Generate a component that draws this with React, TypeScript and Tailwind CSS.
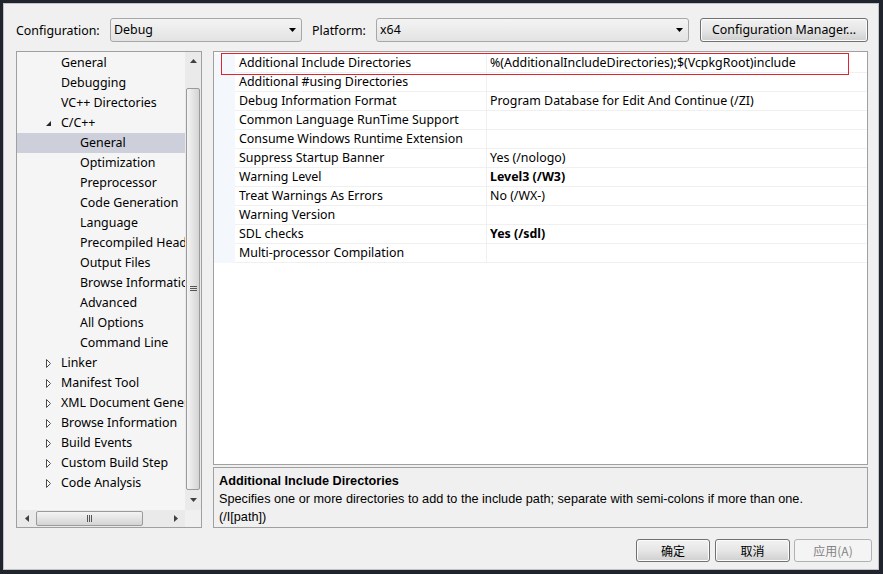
import React from "react";

const UI = { fontFamily: '"Noto Sans", "Liberation Sans", sans-serif' };
const DESC = { fontFamily: '"Liberation Sans", Arial, sans-serif' };
const CJK = { fontFamily: '"Noto Sans CJK SC", "Noto Sans", sans-serif' };

type TreeRow = { label: string; level: 2 | 3; arrow?: "open" | "closed"; selected?: boolean };

const treeRows: TreeRow[] = [
  { label: "General", level: 2 },
  { label: "Debugging", level: 2 },
  { label: "VC++ Directories", level: 2 },
  { label: "C/C++", level: 2, arrow: "open" },
  { label: "General", level: 3, selected: true },
  { label: "Optimization", level: 3 },
  { label: "Preprocessor", level: 3 },
  { label: "Code Generation", level: 3 },
  { label: "Language", level: 3 },
  { label: "Precompiled Headers", level: 3 },
  { label: "Output Files", level: 3 },
  { label: "Browse Information", level: 3 },
  { label: "Advanced", level: 3 },
  { label: "All Options", level: 3 },
  { label: "Command Line", level: 3 },
  { label: "Linker", level: 2, arrow: "closed" },
  { label: "Manifest Tool", level: 2, arrow: "closed" },
  { label: "XML Document Generator", level: 2, arrow: "closed" },
  { label: "Browse Information", level: 2, arrow: "closed" },
  { label: "Build Events", level: 2, arrow: "closed" },
  { label: "Custom Build Step", level: 2, arrow: "closed" },
  { label: "Code Analysis", level: 2, arrow: "closed" },
];

const props: { name: string; value: string; bold?: boolean }[] = [
  { name: "Additional Include Directories", value: "%(AdditionalIncludeDirectories);$(VcpkgRoot)include" },
  { name: "Additional #using Directories", value: "" },
  { name: "Debug Information Format", value: "Program Database for Edit And Continue (/ZI)" },
  { name: "Common Language RunTime Support", value: "" },
  { name: "Consume Windows Runtime Extension", value: "" },
  { name: "Suppress Startup Banner", value: "Yes (/nologo)" },
  { name: "Warning Level", value: "Level3 (/W3)", bold: true },
  { name: "Treat Warnings As Errors", value: "No (/WX-)" },
  { name: "Warning Version", value: "" },
  { name: "SDL checks", value: "Yes (/sdl)", bold: true },
  { name: "Multi-processor Compilation", value: "" },
];

function Arrow({ kind }: { kind: "open" | "closed" }) {
  if (kind === "open") {
    return (
      <svg width="7" height="7" viewBox="0 0 7 7">
        <polygon points="6,1 6,6 1,6" fill="#262626" />
      </svg>
    );
  }
  return (
    <svg width="7" height="9" viewBox="0 0 7 9">
      <polygon points="1.5,0.5 5.5,4.5 1.5,8.5" fill="white" stroke="#4a4a4a" strokeWidth="1" />
    </svg>
  );
}

function Combo({ value, width }: { value: string; width: string }) {
  return (
    <div
      className={`${width} flex h-[24px] items-center justify-between rounded-[3px] border border-[#a7a7a7] bg-gradient-to-b from-[#f4f4f4] to-[#e3e3e3] pl-[3px] pr-[5px] text-[12.4px]`}
    >
      <span>{value}</span>
      <svg width="7" height="4" viewBox="0 0 7 4">
        <polygon points="0,0 7,0 3.5,4" fill="#000" />
      </svg>
    </div>
  );
}

function Button({ children, width, disabled }: { children: React.ReactNode; width: string; disabled?: boolean }) {
  return (
    <div
      className={`${width} flex h-[23px] items-center justify-center rounded-[3px] border ${
        disabled
          ? "border-[#adb2b5] bg-[#f4f4f4] text-[#838383]"
          : "border-[#707070] bg-gradient-to-b from-[#f2f2f2] via-[#e6e6e6] to-[#cfcfcf] text-black shadow-[inset_0_0_0_1px_#fcfcfc]"
      } text-[12px]`}
    >
      {children}
    </div>
  );
}

function VScroll() {
  return (
    <div className="flex w-[16px] shrink-0 flex-col bg-[#eaeaea]">
      <div className="flex h-[18px] items-center justify-center">
        <svg width="7" height="4" viewBox="0 0 7 4">
          <polygon points="0,4 7,4 3.5,0" fill="#404040" />
        </svg>
      </div>
      <div className="h-[18px]" />
      <div className="mx-[1px] flex h-[402px] items-center justify-center rounded-[2px] border border-[#9a9a9a] bg-gradient-to-r from-[#f4f4f4] to-[#d4d4d4]">
        <svg width="7" height="6" viewBox="0 0 7 6">
          <path d="M0 0.5H7M0 2.5H7M0 4.5H7" stroke="#555" strokeWidth="1" />
        </svg>
      </div>
      <div className="flex flex-1 items-center justify-center">
        <svg width="7" height="4" viewBox="0 0 7 4">
          <polygon points="0,0 7,0 3.5,4" fill="#404040" />
        </svg>
      </div>
    </div>
  );
}

function HScroll() {
  return (
    <div className="flex h-[17px] bg-[#eaeaea]">
      <div className="flex flex-1 items-center">
        <div className="flex w-[19px] items-center justify-center">
          <svg width="4" height="7" viewBox="0 0 4 7">
            <polygon points="4,0 4,7 0,3.5" fill="#404040" />
          </svg>
        </div>
        <div className="flex h-[15px] w-[107px] items-center justify-center rounded-[2px] border border-[#9a9a9a] bg-gradient-to-b from-[#f4f4f4] to-[#d4d4d4]">
          <svg width="6" height="7" viewBox="0 0 6 7">
            <path d="M0.5 0V7M2.5 0V7M4.5 0V7" stroke="#555" strokeWidth="1" />
          </svg>
        </div>
        <div className="flex-1" />
        <div className="flex w-[19px] items-center justify-center">
          <svg width="4" height="7" viewBox="0 0 4 7">
            <polygon points="0,0 0,7 4,3.5" fill="#404040" />
          </svg>
        </div>
      </div>
      <div className="w-[16px] bg-[#f0f0f0]" />
    </div>
  );
}

export default function App() {
  return (
    <div className="h-[574px] w-[883px] bg-[#20242c] pb-[4px] pl-[3px] pr-[4px] pt-[3px]" style={UI}>
      <div className="flex h-full flex-col border border-[#bfc3c8] bg-[#f0f0f0] pl-[12px] pr-[10px] text-black">
        {/* top row */}
        <div className="mt-[14px] flex h-[24px] items-center">
          <span className="w-[94px] pt-[2px] text-[12.4px]">Configuration:</span>
          <Combo value="Debug" width="w-[192px]" />
          <span className="ml-[10px] w-[64px] pt-[2px] text-[12.4px]">Platform:</span>
          <Combo value="x64" width="w-[313px]" />
          <div className="ml-[11px] flex h-[24px] w-[168px] items-center justify-center rounded-[3px] border border-[#707070] bg-gradient-to-b from-[#f2f2f2] via-[#e6e6e6] to-[#cfcfcf] text-[12.4px] shadow-[inset_0_0_0_1px_#fcfcfc]">
            Configuration Manager...
          </div>
        </div>

        {/* main */}
        <div className="mt-[9px] flex h-[477px] gap-[11px]">
          {/* tree */}
          <div className="flex w-[186px] flex-col border border-[#a0a0a0] bg-[#f5f5f5]">
            <div className="flex min-h-0 flex-1">
              <div className="min-w-0 flex-1 overflow-hidden pt-[1px] text-[12.4px]">
                {treeRows.map((r, i) => (
                  <div
                    key={i}
                    className={`flex h-[20px] items-center whitespace-nowrap ${r.selected ? "bg-[#cdcfdb]" : ""} ${
                      r.level === 2 ? "pl-[28px]" : "pl-[63px]"
                    }`}
                  >
                    {r.level === 2 && (
                      <span className="flex w-[16px] shrink-0 items-center">{r.arrow ? <Arrow kind={r.arrow} /> : null}</span>
                    )}
                    <span>{r.label}</span>
                  </div>
                ))}
              </div>
              <VScroll />
            </div>
            <HScroll />
          </div>

          {/* right column */}
          <div className="flex flex-1 flex-col gap-[2px]">
            <div className="relative h-[415px] border border-[#a0a0a0] bg-white">
              <div className="pt-[2px] text-[12.4px]">
                {props.map((p, i) => (
                  <div key={i} className="flex h-[19px]">
                    <div className="w-[21px] bg-[#f4f7fb]" />
                    <div className="flex w-[252px] items-center border-b border-r border-[#f0f0f0] pl-[4px] whitespace-nowrap">
                      {p.name}
                    </div>
                    <div className={`flex flex-1 items-center border-b border-[#f0f0f0] pl-[3px] whitespace-nowrap ${p.bold ? "font-bold" : ""}`}>
                      {p.value}
                    </div>
                  </div>
                ))}
              </div>
              <div className="absolute left-[7px] top-[1px] h-[22px] w-[628px] border border-[#e0242f]" />
            </div>
            <div className="h-[61px] border border-[#a0a0a0] bg-[#f0f0f0] px-[5px] pt-[4px] text-[12.7px] leading-[18px]" style={DESC}>
              <div className="font-bold">Additional Include Directories</div>
              <div>Specifies one or more directories to add to the include path; separate with semi-colons if more than one.</div>
              <div>(/I[path])</div>
            </div>
          </div>
        </div>

        {/* buttons */}
        <div className="mr-[-4px] mt-[11px] flex justify-end" style={CJK}>
          <Button width="w-[74px]">确定</Button>
          <div className="w-[5px]" />
          <Button width="w-[75px]">取消</Button>
          <div className="w-[4px]" />
          <Button width="w-[78px]" disabled>
            应用(A)
          </Button>
        </div>
      </div>
    </div>
  );
}
